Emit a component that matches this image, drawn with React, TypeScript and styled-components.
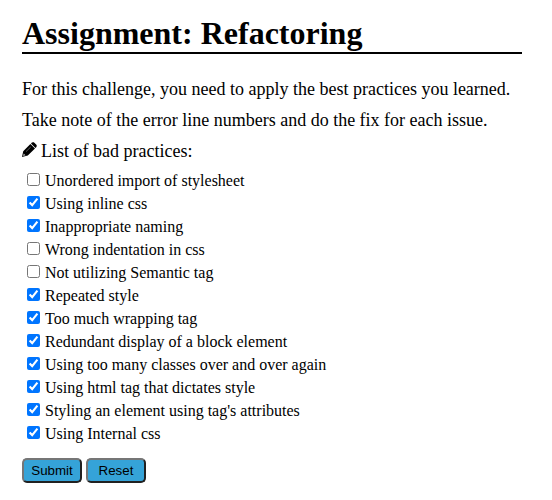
import React from 'react';
import styled, { createGlobalStyle } from 'styled-components';

const GlobalStyle = createGlobalStyle`
  body {
    margin: 0;
    background: #fff;
    color: #000;
    font-family: "Liberation Serif", "Times New Roman", serif;
  }
`;

const Page = styled.main`
  width: 500px;
  padding: 14px 0 0 22px;
`;

const Title = styled.h1`
  margin: 0 0 20px;
  height: 38px;
  border-bottom: 2px solid #000;
  font-size: 32px;
  line-height: 39px;
  font-weight: bold;
`;

const Line = styled.p`
  margin: 0;
  height: 31px;
  font-size: 18px;
  line-height: 31px;
  white-space: nowrap;
`;

const Pencil = styled.svg`
  display: inline-block;
  width: 15px;
  height: 15px;
  margin-right: 4px;
`;

const List = styled.ul`
  margin: 2px 0 0;
  padding: 0;
  list-style: none;
`;

const Item = styled.li`
  height: 23px;
  padding-left: 5px;
`;

const Label = styled.label`
  display: flex;
  font-size: 16px;
  line-height: 23px;
  white-space: nowrap;
`;

const Check = styled.input`
  width: 13px;
  height: 13px;
  margin: 4px 5px 0 0;
`;

const Actions = styled.div`
  display: flex;
  gap: 4px;
  margin-top: 13px;
`;

const Button = styled.button`
  box-sizing: border-box;
  width: 60px;
  height: 25px;
  padding: 0;
  border: 2px solid;
  border-color: #767676 #212121 #212121 #767676;
  border-radius: 5px;
  background: #35a3d8;
  color: #000;
  font: 13.333px "Liberation Sans", Arial, sans-serif;
`;

const practices: { text: string; done: boolean }[] = [
  { text: 'Unordered import of stylesheet', done: false },
  { text: 'Using inline css', done: true },
  { text: 'Inappropriate naming', done: true },
  { text: 'Wrong indentation in css', done: false },
  { text: 'Not utilizing Semantic tag', done: false },
  { text: 'Repeated style', done: true },
  { text: 'Too much wrapping tag', done: true },
  { text: 'Redundant display of a block element', done: true },
  { text: 'Using too many classes over and over again', done: true },
  { text: 'Using html tag that dictates style', done: true },
  { text: "Styling an element using tag's attributes", done: true },
  { text: 'Using Internal css', done: true },
];

export default function App() {
  return (
    <>
      <GlobalStyle />
      <Page>
        <Title>Assignment: Refactoring</Title>
        <Line>For this challenge, you need to apply the best practices you learned.</Line>
        <Line>Take note of the error line numbers and do the fix for each issue.</Line>
        <Line>
          <Pencil viewBox="0 0 15 15" aria-hidden="true">
            <path d="M0 15 1.2 9.2 8.4 2 13 6.6 5.8 13.6Z M9 1.4 9.9 0.5Q10.7 0 11.8 0.3L14.4 2.8Q15.1 3.8 14.4 4.9L13.5 5.9Z" />
            <path d="M4 9.6 8.8 4.9" stroke="#888" strokeWidth="0.7" />
            <path d="M1.1 13.9 1.7 11.4 3.6 13.2Z" fill="#bbb" />
          </Pencil>
          List of bad practices:
        </Line>
        <List>
          {practices.map((p) => (
            <Item key={p.text}>
              <Label>
                <Check type="checkbox" defaultChecked={p.done} />
                {p.text}
              </Label>
            </Item>
          ))}
        </List>
        <Actions>
          <Button type="submit">Submit</Button>
          <Button type="reset">Reset</Button>
        </Actions>
      </Page>
    </>
  );
}
